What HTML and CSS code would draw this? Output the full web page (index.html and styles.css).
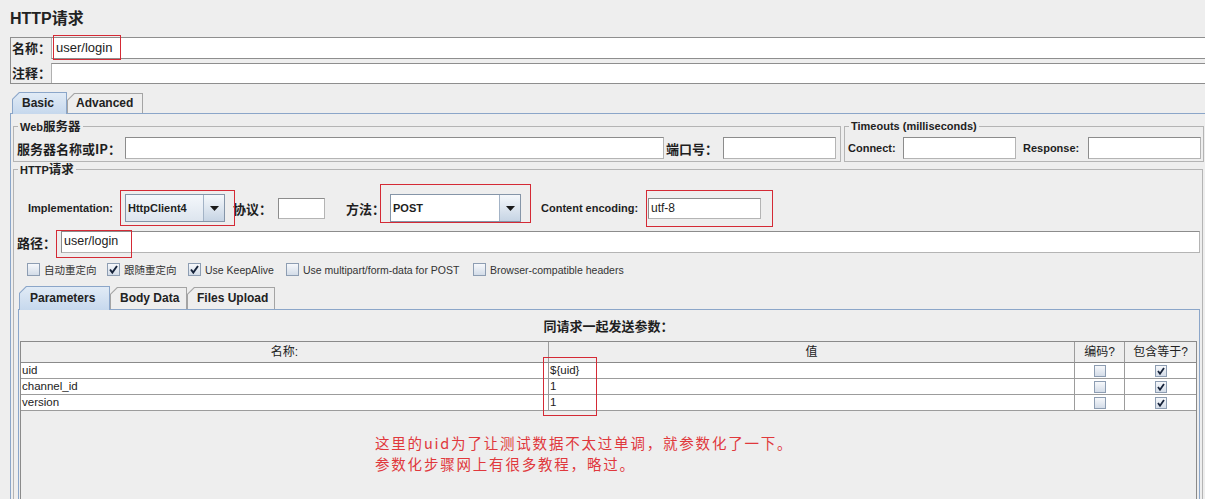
FILE: index.html
```html
<!DOCTYPE html>
<html lang="zh-CN">
<head>
<meta charset="utf-8">
<title>HTTP请求</title>
<link rel="stylesheet" href="styles.css">
</head>
<body>
<div class="page">
  <h1 class="title">HTTP请求</h1>

  <div class="meta">
    <div class="meta-row meta-name">
      <span class="meta-label">名称：</span>
      <div class="meta-field">user/login<span class="mark mark-name"></span></div>
    </div>
    <div class="meta-row meta-comment">
      <span class="meta-label">注释：</span>
      <div class="meta-field"></div>
    </div>
  </div>

  <div class="tabs outer-tabs">
    <div class="tab sel tab-basic"><span>Basic</span></div>
    <div class="tab tab-adv"><span>Advanced</span></div>
  </div>

  <div class="tabpanel outer-panel">
    <div class="top-groups">
      <fieldset class="grp grp-web">
        <legend>Web<span class="cj">服务器</span></legend>
        <div class="row">
          <span class="lbl cj w-server">服务器名称或IP：</span>
          <div class="field w-host"></div>
          <span class="lbl cj w-port">端口号：</span>
          <div class="field w-portf"></div>
        </div>
      </fieldset>
      <fieldset class="grp grp-timeout">
        <legend>Timeouts (milliseconds)</legend>
        <div class="row">
          <span class="lbl lat w-connect">Connect:</span>
          <div class="field w-113"></div>
          <span class="lbl lat w-response">Response:</span>
          <div class="field w-113"></div>
        </div>
      </fieldset>
    </div>

    <fieldset class="grp grp-http">
      <legend>HTTP<span class="cj">请求</span></legend>

      <div class="impl-row">
        <span class="lbl lat w-impl">Implementation:</span>
        <div class="combo combo-impl">
          <span class="combo-text">HttpClient4</span>
          <span class="combo-btn"><svg width="9" height="5" viewBox="0 0 9 5"><path d="M0 0H9L4.5 5Z" fill="#1a1a1a"/></svg></span>
          <span class="mark mark-impl"></span>
        </div>
        <span class="lbl cj w-proto">协议：</span>
        <div class="field small w-proto-f"></div>
        <span class="lbl cj w-method">方法：</span>
        <div class="combo combo-method">
          <span class="combo-text">POST</span>
          <span class="combo-btn"><svg width="9" height="5" viewBox="0 0 9 5"><path d="M0 0H9L4.5 5Z" fill="#1a1a1a"/></svg></span>
          <span class="mark mark-method"></span>
        </div>
        <span class="lbl lat w-enc">Content encoding:</span>
        <div class="field small w-113 enc-field">utf-8<span class="mark mark-enc"></span></div>
      </div>

      <div class="path-row">
        <span class="lbl cj w-path">路径：</span>
        <div class="field path-field">user/login<span class="mark mark-path"></span></div>
      </div>

      <div class="checks">
        <div class="chk w-c1"><span class="cb"></span><span class="chk-lbl">自动重定向</span></div>
        <div class="chk w-c2"><span class="cb"><svg width="11" height="11" viewBox="0 0 11 11"><path d="M2 5.5L4.3 8.6L9 2" fill="none" stroke="#16233a" stroke-width="1.9"/></svg></span><span class="chk-lbl">跟随重定向</span></div>
        <div class="chk w-c3"><span class="cb"><svg width="11" height="11" viewBox="0 0 11 11"><path d="M2 5.5L4.3 8.6L9 2" fill="none" stroke="#16233a" stroke-width="1.9"/></svg></span><span class="chk-lbl">Use KeepAlive</span></div>
        <div class="chk w-c4"><span class="cb"></span><span class="chk-lbl">Use multipart/form-data for POST</span></div>
        <div class="chk"><span class="cb"></span><span class="chk-lbl">Browser-compatible headers</span></div>
      </div>

      <div class="tabs inner-tabs">
        <div class="tab sel tab-params"><span>Parameters</span></div>
        <div class="tab tab-body"><span>Body Data</span></div>
        <div class="tab tab-files"><span>Files Upload</span></div>
      </div>

      <div class="tabpanel inner-panel">
        <div class="params-title">同请求一起发送参数：</div>
        <div class="scroll">
          <div class="grid">
            <div class="th">名称:</div>
            <div class="th">值</div>
            <div class="th">编码?</div>
            <div class="th last">包含等于?</div>

            <div class="td">uid</div>
            <div class="td">${uid}</div>
            <div class="td ctr"><span class="cb tcb"></span></div>
            <div class="td ctr last"><span class="cb tcb"><svg width="10" height="10" viewBox="0 0 10 10"><path d="M2 5L4 7.8L8 2" fill="none" stroke="#16233a" stroke-width="1.8"/></svg></span></div>

            <div class="td">channel_id</div>
            <div class="td">1</div>
            <div class="td ctr"><span class="cb tcb"></span></div>
            <div class="td ctr last"><span class="cb tcb"><svg width="10" height="10" viewBox="0 0 10 10"><path d="M2 5L4 7.8L8 2" fill="none" stroke="#16233a" stroke-width="1.8"/></svg></span></div>

            <div class="td">version</div>
            <div class="td">1</div>
            <div class="td ctr"><span class="cb tcb"></span></div>
            <div class="td ctr last"><span class="cb tcb"><svg width="10" height="10" viewBox="0 0 10 10"><path d="M2 5L4 7.8L8 2" fill="none" stroke="#16233a" stroke-width="1.8"/></svg></span></div>
          </div>
          <div class="note">
            <div class="note-line">这里的uid为了让测试数据不太过单调，就参数化了一下。</div>
            <div class="note-line">参数化步骤网上有很多教程，略过。</div>
          </div>
          <span class="mark mark-table"></span>
        </div>
      </div>
    </fieldset>
  </div>
</div>
</body>
</html>
```

FILE: styles.css
```css
html, body {
  margin: 0;
  overflow: hidden;
}
body {
  width: 1205px;
  height: 499px;
  background: #eeeeee;
  font-family: "Liberation Sans", "Noto Sans CJK SC", sans-serif;
  color: #1e1e1e;
}
.page {
  padding-left: 10px;
}
.title {
  margin: 0;
  padding-top: 9px;
  height: 20px;
  line-height: 20px;
  font-size: 16px;
  font-weight: bold;
  color: #222;
}

/* name / comment */
.meta {
  margin-top: 8px;
  width: 1200px;
  border: 1px solid #8e8e8e;
  border-right: none;
}
.meta-row {
  display: flex;
}
.meta-name { height: 21px; }
.meta-comment { height: 20px; margin-top: 4px; }
.meta-label {
  width: 39px;
  padding-left: 1px;
  font-size: 13px;
  font-weight: bold;
  line-height: 20px;
  font-family: "Noto Sans CJK SC", sans-serif;
}
.meta-field {
  position: relative;
  flex: 1;
  box-sizing: border-box;
  background: #fff;
  border-left: 1px solid #b0b0b0;
  padding-left: 4px;
  font-size: 13px;
  line-height: 20px;
  color: #222;
}
.meta-name .meta-field { border-bottom: 1px solid #8e8e8e; }
.meta-comment .meta-field { border-top: 1px solid #8e8e8e; }

/* red annotation boxes */
.mark {
  position: absolute;
  border: 1px solid #d42a35;
  box-sizing: border-box;
  pointer-events: none;
}
.mark-name { left: 1px; top: -3px; width: 68px; height: 25px; }
.mark-impl { left: -6px; top: -5px; width: 115px; height: 36px; }
.mark-method { left: -11px; top: -11px; width: 151px; height: 39px; }
.mark-enc { left: -3px; top: -9px; width: 127px; height: 37px; }
.mark-path { left: -6px; top: -2px; width: 76px; height: 28px; }
.mark-table { left: 522px; top: 15px; width: 54px; height: 59px; }

/* tabs */
.tabs {
  display: flex;
  align-items: flex-end;
}
.outer-tabs {
  margin-top: 8px;
  height: 21px;
  padding-left: 2px;
}
.tab {
  box-sizing: border-box;
  height: 20px;
  padding: 1px 1px 0 1px;
  background: #a4a4a4;
  clip-path: polygon(0 100%, 0 7px, 7px 0, 100% 0, 100% 100%);
}
.tab span {
  display: block;
  height: 100%;
  box-sizing: border-box;
  background: #eeeeee;
  clip-path: polygon(0 100%, 0 6.6px, 6.6px 0, 100% 0, 100% 100%);
  font-size: 12px;
  font-weight: bold;
  line-height: 19px;
  color: #222;
  white-space: nowrap;
}
.tab.sel {
  height: 22px;
  margin-bottom: -1px;
  position: relative;
  z-index: 1;
  background: #8ba6c9;
}
.tab.sel span {
  background: linear-gradient(#e1ebf6, #c6d8ed);
  line-height: 20px;
}
.tab-basic { width: 55px; }
.tab-basic span { padding-left: 9px; }
.tab-adv { width: 76px; }
.tab-adv span { padding-left: 8px; }

.outer-panel {
  width: 1200px;
  height: 400px;
  box-sizing: border-box;
  border-top: 1px solid #8ba6c9;
  border-left: 1px solid #8ba6c9;
  padding: 5px 0 0 2px;
}

/* groups */
.top-groups {
  display: flex;
  gap: 3px;
}
fieldset.grp {
  margin: 0;
  box-sizing: border-box;
  border: 1px solid #b4b4b4;
  padding: 4px 2px 2px 3px;
  min-width: 0;
}
fieldset.grp legend {
  padding: 0 2px;
  margin-left: 1px;
  font-size: 11px;
  font-weight: bold;
  line-height: 14px;
  height: 14px;
  color: #222;
}
.cj {
  font-family: "Noto Sans CJK SC", sans-serif;
  font-size: 13px;
  font-weight: bold;
}
legend .cj { font-size: 12.5px; }
.grp-web { width: 828px; }
.grp-timeout { width: 360px; }
.grp-http {
  margin-top: 5px;
  width: 1190px;
  height: 360px;
}

.row {
  display: flex;
  align-items: center;
  height: 22px;
}
.lbl {
  white-space: nowrap;
  color: #1e1e1e;
}
.lat {
  font-size: 11px;
  font-weight: bold;
}
.field {
  position: relative;
  box-sizing: border-box;
  height: 22px;
  background: #fff;
  border: 1px solid #8c8c8c;
  border-right-color: #b4b4b4;
  border-bottom-color: #b4b4b4;
  font-size: 12.5px;
  line-height: 19px;
  padding-left: 2px;
  color: #222;
}
.field.small { height: 21px; }

.w-server { width: 108px; }
.w-host { width: 539px; }
.w-port { width: 57px; margin-left: 2px; }
.w-portf { width: 113px; }
.w-113 { width: 113px; }
.w-connect { width: 55px; }
.w-response { width: 65px; margin-left: 7px; }

/* implementation row */
.impl-row {
  display: flex;
  align-items: center;
  height: 28px;
  margin-top: 14px;
  padding-left: 11px;
}
.w-impl { width: 97px; }
.combo {
  position: relative;
  display: flex;
  box-sizing: border-box;
  height: 28px;
  border: 1px solid #8595a8;
}
.combo-impl {
  width: 100px;
  background: linear-gradient(#f4f7fb, #dde5ee);
}
.combo-method {
  width: 131px;
  background: #fff;
}
.combo-text {
  flex: 1;
  padding-left: 2px;
  font-size: 11px;
  font-weight: bold;
  line-height: 26px;
  color: #1e1e1e;
}
.combo-btn {
  width: 20px;
  display: flex;
  align-items: center;
  justify-content: center;
  border-left: 1px solid #a3b3c6;
  background: linear-gradient(#f5f8fb, #c6d4e4);
}
.w-proto { width: 45px; margin-left: 8px; }
.w-proto-f { width: 47px; }
.w-method { width: 44px; margin-left: 21px; }
.w-enc { width: 107px; margin-left: 20px; }
.enc-field { font-size: 12px; }

/* path */
.path-row {
  display: flex;
  align-items: center;
  height: 22px;
  margin-top: 9px;
}
.w-path { width: 44px; }
.path-field {
  flex: 1;
  font-size: 12.5px;
  padding-left: 2px;
}

/* checkboxes */
.checks {
  display: flex;
  align-items: center;
  height: 13px;
  margin-top: 10px;
  padding-left: 10px;
}
.chk {
  display: flex;
  align-items: center;
}
.w-c1 { width: 80px; }
.w-c2 { width: 81px; }
.w-c3 { width: 98px; }
.w-c4 { width: 187px; }
.cb {
  box-sizing: border-box;
  width: 13px;
  height: 13px;
  border: 1px solid #8d9db2;
  background: linear-gradient(#f6f8fb, #d3dce8);
  display: inline-flex;
  align-items: center;
  justify-content: center;
  flex: none;
}
.chk-lbl {
  margin-left: 4px;
  font-size: 10.5px;
  color: #333;
  white-space: nowrap;
}

/* inner tabs */
.inner-tabs {
  margin-top: 10px;
  height: 23px;
  padding-left: 2px;
}
.inner-tabs .tab { height: 22px; }
.inner-tabs .tab span { line-height: 21px; }
.inner-tabs .tab.sel { height: 24px; }
.inner-tabs .tab.sel span { line-height: 22px; }
.tab-params { width: 91px; }
.tab-params span { padding-left: 10px; }
.tab-body { width: 77px; }
.tab-body span { padding-left: 9px; }
.tab-files { width: 88px; }
.tab-files span { padding-left: 9px; }

.inner-panel {
  margin-left: 1px;
  width: 1182px;
  height: 200px;
  box-sizing: border-box;
  border-top: 1px solid #8ba6c9;
  border-left: 1px solid #8ba6c9;
  border-right: 1px solid #8ba6c9;
  padding: 0 2px 0 1px;
}
.params-title {
  height: 31px;
  line-height: 31px;
  text-align: center;
  font-family: "Noto Sans CJK SC", sans-serif;
  font-size: 13px;
  font-weight: bold;
  color: #1e1e1e;
}
.scroll {
  position: relative;
  width: 1177px;
  height: 170px;
  box-sizing: border-box;
  border: 1px solid #8a8a8a;
  background: #eeeeee;
}
.grid {
  display: grid;
  grid-template-columns: 528px 526px 50px 71px;
}
.th {
  box-sizing: border-box;
  height: 21px;
  border-right: 1px solid #9c9c9c;
  border-bottom: 1px solid #8a8a8a;
  text-align: center;
  font-size: 12px;
  line-height: 20px;
  color: #222;
  background: #eeeeee;
}
.td {
  box-sizing: border-box;
  height: 16px;
  border-right: 1px solid #9c9c9c;
  border-bottom: 1px solid #9c9c9c;
  background: #fff;
  font-size: 11.5px;
  line-height: 15px;
  padding-left: 1px;
  color: #222;
  white-space: nowrap;
}
.last { border-right: none; }
.td.ctr {
  display: flex;
  align-items: center;
  justify-content: center;
  padding-left: 0;
}
.tcb {
  width: 12px;
  height: 12px;
}
.note {
  margin: 21px 0 0 354px;
  font-family: "Noto Sans CJK SC", sans-serif;
  font-size: 14.5px;
  letter-spacing: 1.8px;
  color: #e0383c;
}
.note-line {
  height: 21px;
  line-height: 21px;
  white-space: nowrap;
}
```
